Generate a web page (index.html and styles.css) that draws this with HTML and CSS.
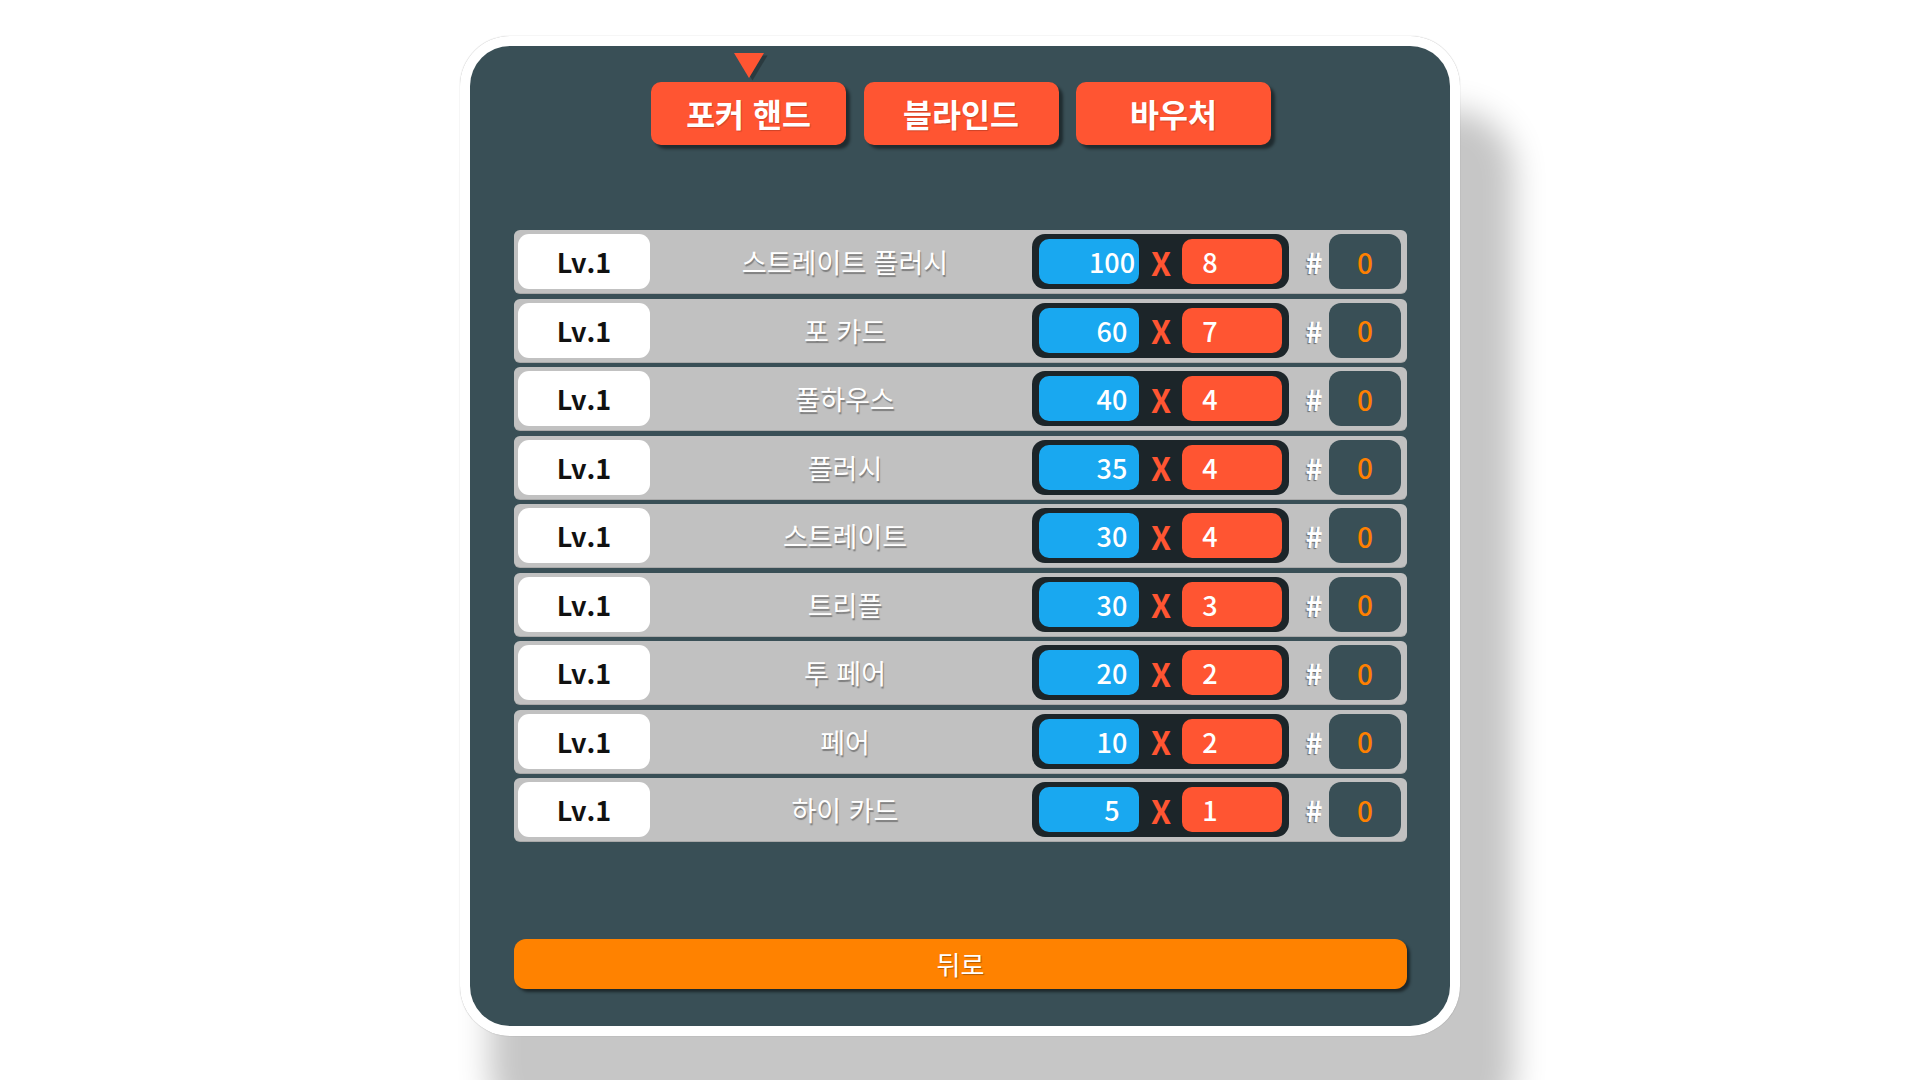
FILE: index.html
```html
<!DOCTYPE html>
<html lang="ko">
<head>
<meta charset="utf-8">
<title>포커 핸드</title>
<link rel="stylesheet" href="styles.css">
</head>
<body>
<div class="frame">
  <div class="panel">
    <div class="tabs">
      <div class="tab active">
        <svg class="pointer" width="34" height="29" viewBox="0 0 34 29"><polygon points="2,1 32,1 17,26" fill="#1f2a2e" opacity="0.55" transform="translate(1.5,1.5)"/><polygon points="0,0 30,0 15,25" fill="#ff5532"/></svg>
        포커 핸드
      </div>
      <div class="tab">블라인드</div>
      <div class="tab">바우처</div>
    </div>

    <div class="hands">
      <div class="row"><div class="lv">Lv.1</div><div class="name">스트레이트 플러시</div><div class="mult"><div class="chips">100</div><div class="x">X</div><div class="mul">8</div></div><div class="hash">#</div><div class="count">0</div></div>
      <div class="row"><div class="lv">Lv.1</div><div class="name">포 카드</div><div class="mult"><div class="chips">60</div><div class="x">X</div><div class="mul">7</div></div><div class="hash">#</div><div class="count">0</div></div>
      <div class="row"><div class="lv">Lv.1</div><div class="name">풀하우스</div><div class="mult"><div class="chips">40</div><div class="x">X</div><div class="mul">4</div></div><div class="hash">#</div><div class="count">0</div></div>
      <div class="row"><div class="lv">Lv.1</div><div class="name">플러시</div><div class="mult"><div class="chips">35</div><div class="x">X</div><div class="mul">4</div></div><div class="hash">#</div><div class="count">0</div></div>
      <div class="row"><div class="lv">Lv.1</div><div class="name">스트레이트</div><div class="mult"><div class="chips">30</div><div class="x">X</div><div class="mul">4</div></div><div class="hash">#</div><div class="count">0</div></div>
      <div class="row"><div class="lv">Lv.1</div><div class="name">트리플</div><div class="mult"><div class="chips">30</div><div class="x">X</div><div class="mul">3</div></div><div class="hash">#</div><div class="count">0</div></div>
      <div class="row"><div class="lv">Lv.1</div><div class="name">투 페어</div><div class="mult"><div class="chips">20</div><div class="x">X</div><div class="mul">2</div></div><div class="hash">#</div><div class="count">0</div></div>
      <div class="row"><div class="lv">Lv.1</div><div class="name">페어</div><div class="mult"><div class="chips">10</div><div class="x">X</div><div class="mul">2</div></div><div class="hash">#</div><div class="count">0</div></div>
      <div class="row"><div class="lv">Lv.1</div><div class="name">하이 카드</div><div class="mult"><div class="chips">5</div><div class="x">X</div><div class="mul">1</div></div><div class="hash">#</div><div class="count">0</div></div>
    </div>

    <div class="back">뒤로</div>
  </div>
</div>
</body>
</html>
```

FILE: styles.css
```css
* { box-sizing: border-box; }

html, body {
  margin: 0;
  padding: 0;
  background: #ffffff;
}

body {
  width: 1920px;
  height: 1080px;
  overflow: hidden;
  display: flex;
  justify-content: center;
  align-items: flex-start;
  padding-top: 36px;
  font-family: "Noto Sans CJK KR", "Noto Sans", sans-serif;
}

.frame {
  width: 1000px;
  height: 1000px;
  padding: 10px;
  background: #ffffff;
  border-radius: 50px;
  box-shadow: 0 0 1px rgba(0, 0, 0, 0.35), 42px 86px 32px 12px #c6c6c6;
}

.panel {
  width: 980px;
  height: 980px;
  background: #394f56;
  border-radius: 40px;
  display: flex;
  flex-direction: column;
  align-items: stretch;
  padding: 36px 43px 0 44px;
}

.tabs {
  display: flex;
  justify-content: center;
  gap: 17.5px;
  padding-left: 1px;
}

.tab {
  position: relative;
  width: 195px;
  height: 63px;
  background: #ff5532;
  border-radius: 10px;
  box-shadow: 4px 4px 3px rgba(0, 0, 0, 0.45);
  color: #ffffff;
  font-size: 31.5px;
  font-weight: 700;
  line-height: 1;
  display: flex;
  align-items: center;
  justify-content: center;
  text-shadow: 1px 1px 1px rgba(0, 0, 0, 0.2);
}

.pointer {
  position: absolute;
  top: -29px;
  left: 83px;
}

.hands {
  margin-top: 85px;
  display: flex;
  flex-direction: column;
  gap: 5.5px;
}

.row {
  height: 63px;
  background: #c1c1c1;
  border-radius: 6px;
  display: flex;
  align-items: center;
  padding-left: 4px;
  box-shadow: 0 1px 0 #a9a9a9;
}

.lv {
  width: 132px;
  height: 55px;
  background: #ffffff;
  border-radius: 11px;
  display: flex;
  align-items: center;
  justify-content: center;
  color: #111111;
  font-size: 27px;
  font-weight: 700;
  line-height: 1;
}

.name {
  flex: 1;
  padding-left: 8px;
  text-align: center;
  color: #ffffff;
  font-size: 27px;
  font-weight: 400;
  line-height: 1;
  text-shadow: 1px 2px 1px rgba(0, 0, 0, 0.35);
}

.mult {
  width: 257px;
  height: 55px;
  background: #1c2529;
  border-radius: 13px;
  display: flex;
  align-items: center;
  padding: 0 7px;
}

.chips, .mul {
  width: 100px;
  height: 45px;
  border-radius: 10px;
  display: flex;
  align-items: center;
  justify-content: center;
  color: #ffffff;
  font-size: 27px;
  font-weight: 500;
  line-height: 1;
}

.chips {
  background: #19a8f0;
  padding-left: 46px;
}

.mul {
  background: #ff5532;
  padding-right: 44px;
}

.x {
  width: 43px;
  text-align: center;
  color: #ff5532;
  font-size: 32px;
  font-weight: 700;
  line-height: 1;
  padding-left: 1px;
}

.hash {
  width: 40px;
  padding-left: 10px;
  text-align: center;
  color: #ffffff;
  font-size: 29px;
  font-weight: 700;
  line-height: 1;
  text-shadow: -1px 1px 1px rgba(0, 0, 0, 0.45);
}

.count {
  width: 72px;
  height: 55px;
  margin-right: 6px;
  background: #394f56;
  border-radius: 12px;
  display: flex;
  align-items: center;
  justify-content: center;
  color: #ff8000;
  font-size: 28px;
  font-weight: 500;
  line-height: 1;
}

.back {
  margin-top: 98px;
  height: 50px;
  background: #ff8200;
  border-radius: 12px;
  box-shadow: 3px 3px 3px rgba(0, 0, 0, 0.5);
  display: flex;
  align-items: center;
  justify-content: center;
  color: #ffffff;
  font-size: 26px;
  font-weight: 400;
  line-height: 1;
  text-shadow: 1px 1px 1px rgba(0, 0, 0, 0.3);
}
```
